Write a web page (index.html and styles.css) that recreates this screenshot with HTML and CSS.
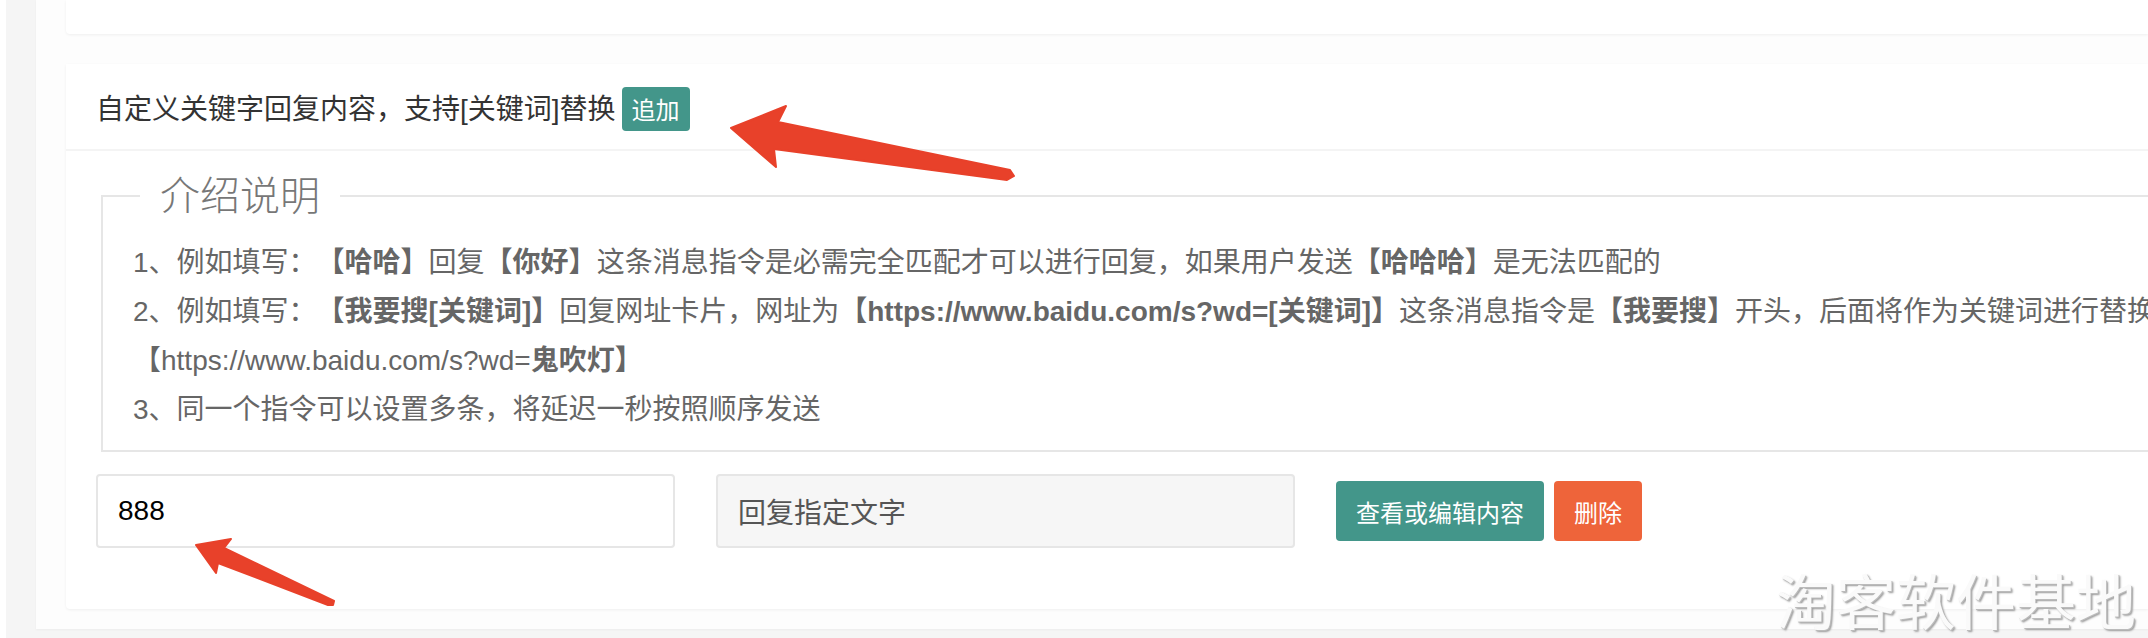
FILE: index.html
```html
<!DOCTYPE html>
<html lang="zh-CN">

<head>
    <meta charset="utf-8">
    <meta name="viewport" content="width=device-width, initial-scale=1.0">
    <title>自定义关键字回复</title>
    <link rel="stylesheet" href="styles.css">
</head>

<body>

    <div class="panel">
        <div class="card top-card"></div>

        <div class="card">
            <div class="card-header">
                <span>自定义关键字回复内容，支持[关键词]替换</span>
                <button class="btn btn-xs">追加</button>
            </div>

            <div class="card-body">
                <fieldset class="field">
                    <legend>介绍说明</legend>
                    <div class="field-box">
                        <p>1、例如填写：<b>【哈哈】</b>回复<b>【你好】</b>这条消息指令是必需完全匹配才可以进行回复，如果用户发送<b>【哈哈哈】</b>是无法匹配的</p>
                        <p>2、例如填写：<b>【我要搜[关键词]】</b>回复网址卡片，网址为<b>【https://www.baidu.com/s?wd=[关键词]】</b>这条消息指令是<b>【我要搜】</b>开头，后面将作为关键词进行替换</p>
                        <p>【https://www.baidu.com/s?wd=<b>鬼吹灯】</b></p>
                        <p>3、同一个指令可以设置多条，将延迟一秒按照顺序发送</p>
                    </div>
                </fieldset>

                <div class="row">
                    <input class="input" type="text" value="888">
                    <input class="input input-gray" type="text" value="回复指定文字" readonly>
                    <button class="btn btn-sm">查看或编辑内容</button>
                    <button class="btn btn-sm btn-danger">删除</button>
                </div>
            </div>
        </div>
    </div>

    <!-- markup arrows drawn over the screenshot -->
    <svg class="marks" width="2148" height="638" viewBox="0 0 2148 638">
        <polygon class="arrow" points="731,128 786,106 778,122 1010,170 1014,176 1007,180 774,149 776,167" />
        <polygon class="arrow" points="196,545 231,539 224,548 334,601 333,605 328,605 218,563 216,573" />
    </svg>

    <div class="watermark">淘客软件基地</div>

</body>

</html>
```

FILE: styles.css
```css
html {
    background-color: #f5f5f5;
}

body {
    margin: 0;
    height: 638px;
    overflow: hidden;
    border-left: 6px solid #fff;
    font-family: "Liberation Sans", "Noto Sans CJK SC", sans-serif;
    font-size: 28px;
    color: #333;
    position: relative;
    text-spacing-trim: space-all;
}

.panel {
    margin-left: 30px;
    padding: 0 0 20px 30px;
    background-color: #fdfdfd;
    box-shadow: 0 1px 2px rgba(0, 0, 0, .04);
}

.card {
    background-color: #fff;
    border-radius: 0 0 0 4px;
    box-shadow: 0 1px 3px rgba(0, 0, 0, .06);
}

.top-card {
    height: 34px;
    margin-bottom: 30px;
}

.card-header {
    height: 85px;
    border-bottom: 2px solid #f4f4f4;
    padding-left: 30px;
    display: flex;
    align-items: center;
    gap: 6px;
}

.card-body {
    padding: 21px 0 61px 30px;
}

.btn {
    border: none;
    color: #fff;
    background-color: #43968a;
    border-radius: 4px;
    font-family: inherit;
    cursor: pointer;
}

.btn-xs {
    height: 44px;
    padding: 0 10px;
    font-size: 24px;
    margin-top: 4px;
}

.btn-sm {
    height: 60px;
    padding: 0 20px;
    font-size: 24px;
}

.btn-danger {
    background-color: #ee643a;
    margin-left: 10px;
}

.field {
    margin: 0 0 0 5px;
    padding: 0;
    border: 2px solid #e6e6e6;
    border-right: none;
    min-width: 0;
}

.field legend {
    margin-left: 37px;
    padding: 0 20px;
    font-size: 40px;
    line-height: 48px;
    font-weight: 300;
    color: #777;
}

.field-box {
    padding: 18px 0 16px 30px;
    color: #666;
    overflow: hidden;
}

.field-box p {
    margin: 0;
    line-height: 49px;
    white-space: nowrap;
}

.row {
    margin-top: 22px;
    display: flex;
    align-items: center;
}

.input {
    box-sizing: border-box;
    width: 579px;
    height: 74px;
    padding-left: 20px;
    border: 2px solid #e6e6e6;
    border-radius: 4px;
    background-color: #fff;
    font-family: inherit;
    font-size: 28px;
    color: #000;
    margin-right: 41px;
    outline: none;
}

.input-gray {
    background-color: #f6f6f6;
    color: #555;
}

.marks {
    position: absolute;
    left: -6px;
    top: 0;
    pointer-events: none;
}

.arrow {
    fill: #e8412a;
    stroke: #e8412a;
    stroke-width: 2;
    stroke-linejoin: round;
}

.watermark {
    position: absolute;
    left: 1770px;
    top: 564px;
    font-family: "Noto Sans CJK SC", sans-serif;
    font-size: 60px;
    line-height: 70px;
    color: #fafafa;
    text-shadow: 1px 1px 0 #bbb, 2px 2px 2px #999;
}
```
